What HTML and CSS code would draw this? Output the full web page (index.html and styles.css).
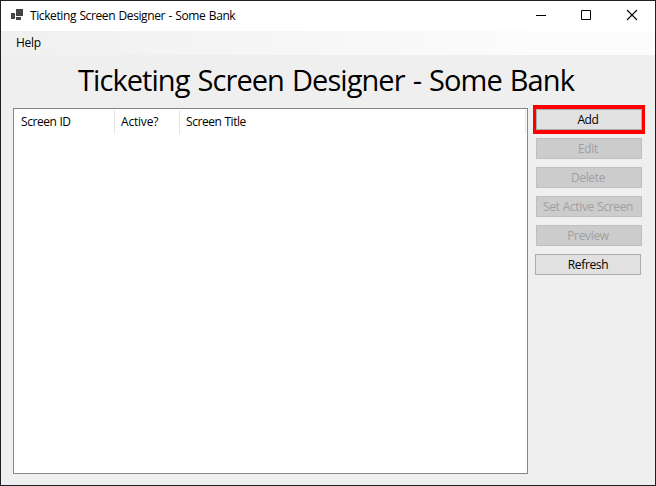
FILE: index.html
```html
<!DOCTYPE html>
<html lang="en">
<head>
<meta charset="utf-8">
<title>Ticketing Screen Designer - Some Bank</title>
<link rel="stylesheet" href="styles.css">
</head>
<body>
<div class="window">
  <header class="titlebar">
    <svg class="app-icon" width="12" height="11" viewBox="0 0 12 11" shape-rendering="crispEdges"><path fill="#444" d="M5 0h7v7H5zM0 4h4v6H0zM5 8h5v3H5z"/></svg>
    <span class="caption">Ticketing Screen Designer - Some Bank</span>
    <div class="controls">
      <svg width="46" height="29" viewBox="0 0 46 29"><path d="M18 14.5h10" stroke="#000"/></svg>
      <svg width="46" height="29" viewBox="0 0 46 29"><path d="M17.5 9.5h9v9h-9z" fill="none" stroke="#000"/></svg>
      <svg width="46" height="29" viewBox="0 0 46 29"><path d="M17 9l10 10M27 9L17 19" stroke="#000" stroke-width="1.1"/></svg>
    </div>
  </header>
  <nav class="menubar"><span class="menu-item">Help</span></nav>
  <h1 class="heading"><span class="heading-text">Ticketing Screen Designer - Some Bank</span></h1>
  <main class="content">
    <section class="list">
      <div class="columns">
        <div class="col col-id"><span>Screen ID</span></div>
        <div class="col col-active"><span>Active?</span></div>
        <div class="col col-title"><span>Screen Title</span></div>
      </div>
    </section>
    <aside class="actions">
      <div class="highlight"><button class="btn add"><span>Add</span></button></div>
      <button class="btn edit" disabled><span>Edit</span></button>
      <button class="btn delete" disabled><span>Delete</span></button>
      <button class="btn set-active" disabled><span>Set Active Screen</span></button>
      <button class="btn preview" disabled><span>Preview</span></button>
      <button class="btn refresh"><span>Refresh</span></button>
    </aside>
  </main>
</div>
</body>
</html>
```
FILE: styles.css
```css
* { box-sizing: border-box; }
body { margin: 0; }
.window {
  width: 656px;
  height: 486px;
  border: 1px solid #202024;
  background: #efefef;
  display: flex;
  flex-direction: column;
  font: 12px/16px "Open Sans", "Noto Sans", sans-serif;
  letter-spacing: -0.45px;
  word-spacing: 0.4px;
  color: #000;
  white-space: nowrap;
  overflow: hidden;
}
.titlebar {
  height: 30px;
  flex: none;
  background: #fff;
  display: flex;
  padding-left: 10px;
}
.app-icon { margin-top: 8px; flex: none; }
.caption { margin: 7px 0 0 7px; letter-spacing: -0.4px; word-spacing: 0.7px; }
.controls { display: flex; margin: 0 -1px 0 auto; }
.menubar {
  height: 24px;
  flex: none;
  background: linear-gradient(90deg, #f0f0f0, #fcfcfc 85%);
  padding: 4px 15px;
  letter-spacing: -0.25px;
}
.heading {
  height: 52px;
  flex: none;
  margin: 0;
  padding: 5px 0 0 77px;
  font-size: 29px;
  line-height: 40px;
  font-weight: 400;
  letter-spacing: -0.93px;
  word-spacing: 1.4px;
}
.content { display: flex; gap: 5px; padding-left: 12px; }
.list {
  width: 515px;
  height: 366px;
  margin-top: 1px;
  border: 1px solid #828790;
  background: #fff;
}
.columns { display: flex; height: 25px; padding: 1px 1px 0 0; }
.col { border-right: 1px solid #e5e5e5; padding: 4px 0 0 6px; }
.col-id { width: 101px; padding-left: 7px; }
.col-active { width: 65px; letter-spacing: -0.2px; }
.col-title { flex: 1; }
.actions {
  width: 112px;
  display: flex;
  flex-direction: column;
  align-items: center;
  gap: 8px;
  margin-top: -2px;
}
.highlight { background: #f00; padding: 4px 3px; margin-bottom: -4px; }
.btn {
  display: flex;
  align-items: center;
  justify-content: center;
  width: 106px;
  height: 21px;
  padding: 0 2px 0 0;
  border: 1px solid #adadad;
  border-radius: 0;
  background: #e1e1e1;
  color: #000;
  font: inherit;
  letter-spacing: -0.35px;
  word-spacing: inherit;
}
.btn:disabled { background: #ccc; border-color: #bfbfbf; color: #a0a0a0; }
.refresh { margin-right: 2px; padding-right: 0; }
```
